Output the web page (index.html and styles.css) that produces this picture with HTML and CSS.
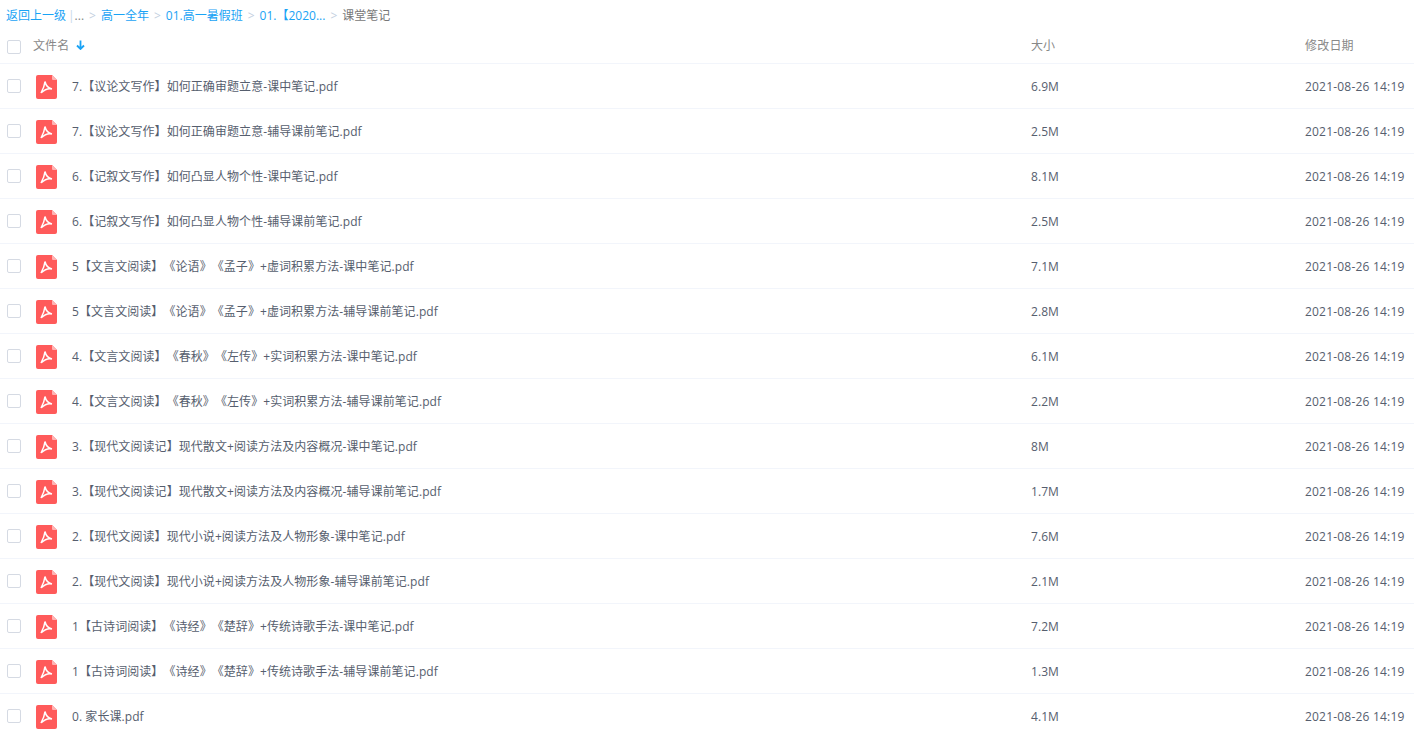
FILE: index.html
```html
<!DOCTYPE html>
<html lang="zh-CN">
<head>
    <meta charset="UTF-8">
    <title>课堂笔记</title>
    <link rel="stylesheet" href="styles.css">
</head>
<body>
    <svg class="sprite" width="0" height="0">
        <symbol id="pdf" viewBox="0 0 21 24">
            <path d="M2 0H16L21 5V22a2 2 0 0 1-2 2H2a2 2 0 0 1-2-2V2a2 2 0 0 1 2-2z" fill="#ff5a5a"/>
            <path d="M16 0L21 5H17a1 1 0 0 1-1-1z" fill="#ffb3b3"/>
            <path d="M9 6.500c-.3 3-1.800 7.500-4 11.500M9 6.500c.6 3 2.800 6.500 7 7.500M16 14c-3.500-.8-7.500.6-10.800 3.800" fill="none" stroke="#fff" stroke-width="1.500"/>
        </symbol>
    </svg>
    <div class="crumbs">
        <a>返回上一级</a><span class="bar">|</span><span class="dots">...</span><span class="sep">&gt;</span><a>高一全年</a><span class="sep">&gt;</span><a>01.高一暑假班</a><span class="sep">&gt;</span><a>01.【2020...</a><span class="sep">&gt;</span><span class="current">课堂笔记</span>
    </div>
    <div class="row head">
        <span class="check"></span>
        <div class="name">文件名<span class="sort">
            <svg width="9" height="10" viewBox="0 0 9 10"><path d="M4.500 0.500V8.500M1 5.500L4.500 9L8 5.500" fill="none" stroke="#1aa3f5" stroke-width="1.800"/></svg>
        </span></div>
        <div class="size">大小</div>
        <div class="date">修改日期</div>
    </div>
    <div class="row"><span class="check"></span><svg class="icon"><use href="#pdf"/></svg><div class="name">7.【议论文写作】如何正确审题立意-课中笔记.pdf</div><div class="size">6.9M</div><div class="date">2021-08-26 14:19</div></div>
    <div class="row"><span class="check"></span><svg class="icon"><use href="#pdf"/></svg><div class="name">7.【议论文写作】如何正确审题立意-辅导课前笔记.pdf</div><div class="size">2.5M</div><div class="date">2021-08-26 14:19</div></div>
    <div class="row"><span class="check"></span><svg class="icon"><use href="#pdf"/></svg><div class="name">6.【记叙文写作】如何凸显人物个性-课中笔记.pdf</div><div class="size">8.1M</div><div class="date">2021-08-26 14:19</div></div>
    <div class="row"><span class="check"></span><svg class="icon"><use href="#pdf"/></svg><div class="name">6.【记叙文写作】如何凸显人物个性-辅导课前笔记.pdf</div><div class="size">2.5M</div><div class="date">2021-08-26 14:19</div></div>
    <div class="row"><span class="check"></span><svg class="icon"><use href="#pdf"/></svg><div class="name">5【文言文阅读】《论语》《孟子》+虚词积累方法-课中笔记.pdf</div><div class="size">7.1M</div><div class="date">2021-08-26 14:19</div></div>
    <div class="row"><span class="check"></span><svg class="icon"><use href="#pdf"/></svg><div class="name">5【文言文阅读】《论语》《孟子》+虚词积累方法-辅导课前笔记.pdf</div><div class="size">2.8M</div><div class="date">2021-08-26 14:19</div></div>
    <div class="row"><span class="check"></span><svg class="icon"><use href="#pdf"/></svg><div class="name">4.【文言文阅读】《春秋》《左传》+实词积累方法-课中笔记.pdf</div><div class="size">6.1M</div><div class="date">2021-08-26 14:19</div></div>
    <div class="row"><span class="check"></span><svg class="icon"><use href="#pdf"/></svg><div class="name">4.【文言文阅读】《春秋》《左传》+实词积累方法-辅导课前笔记.pdf</div><div class="size">2.2M</div><div class="date">2021-08-26 14:19</div></div>
    <div class="row"><span class="check"></span><svg class="icon"><use href="#pdf"/></svg><div class="name">3.【现代文阅读记】现代散文+阅读方法及内容概况-课中笔记.pdf</div><div class="size">8M</div><div class="date">2021-08-26 14:19</div></div>
    <div class="row"><span class="check"></span><svg class="icon"><use href="#pdf"/></svg><div class="name">3.【现代文阅读记】现代散文+阅读方法及内容概况-辅导课前笔记.pdf</div><div class="size">1.7M</div><div class="date">2021-08-26 14:19</div></div>
    <div class="row"><span class="check"></span><svg class="icon"><use href="#pdf"/></svg><div class="name">2.【现代文阅读】现代小说+阅读方法及人物形象-课中笔记.pdf</div><div class="size">7.6M</div><div class="date">2021-08-26 14:19</div></div>
    <div class="row"><span class="check"></span><svg class="icon"><use href="#pdf"/></svg><div class="name">2.【现代文阅读】现代小说+阅读方法及人物形象-辅导课前笔记.pdf</div><div class="size">2.1M</div><div class="date">2021-08-26 14:19</div></div>
    <div class="row"><span class="check"></span><svg class="icon"><use href="#pdf"/></svg><div class="name">1【古诗词阅读】《诗经》《楚辞》+传统诗歌手法-课中笔记.pdf</div><div class="size">7.2M</div><div class="date">2021-08-26 14:19</div></div>
    <div class="row"><span class="check"></span><svg class="icon"><use href="#pdf"/></svg><div class="name">1【古诗词阅读】《诗经》《楚辞》+传统诗歌手法-辅导课前笔记.pdf</div><div class="size">1.3M</div><div class="date">2021-08-26 14:19</div></div>
    <div class="row"><span class="check"></span><svg class="icon"><use href="#pdf"/></svg><div class="name">0. 家长课.pdf</div><div class="size">4.1M</div><div class="date">2021-08-26 14:19</div></div>
</body>
</html>
```

FILE: styles.css
```css
html, body {
    height: 100%;
    overflow: hidden;
}
body {
    margin: 0;
    background: #fff;
    font-family: "Open Sans", "Noto Sans CJK SC", sans-serif;
    font-size: 12px;
    letter-spacing: 0.07px;
    color: #565e6e;
    text-spacing-trim: space-all;
}
.sprite {
    display: block;
    height: 0;
}
.crumbs {
    display: flex;
    align-items: center;
    height: 30px;
    padding-left: 6px;
    letter-spacing: 0;
    color: #666;
}
.crumbs a {
    color: #1aa3f5;
}
.bar {
    margin-left: 2px;
    color: #c7d8ea;
}
.dots {
    color: #888;
}
.sep {
    margin: 0 5px;
    color: #c3cfe0;
}
.current {
    color: #777;
}
.row {
    display: flex;
    align-items: center;
    height: 44px;
    border-bottom: 1px solid #f2f5fb;
}
.row.head {
    height: 29px;
    padding-bottom: 4px;
    color: #888;
}
.check {
    flex: none;
    width: 12px;
    height: 12px;
    margin-left: 7px;
    border: 1px solid #d5dae3;
    border-radius: 2px;
}
.head .check {
    margin-top: 4px;
}
.head .name {
    margin-left: 12px;
}
.sort {
    margin-left: 4px;
}
.icon {
    flex: none;
    width: 21px;
    height: 24px;
    margin-left: 15px;
    margin-top: 2px;
}
.name {
    flex: 1;
    margin-left: 15px;
}
.size {
    flex: none;
    width: 274px;
}
.date {
    flex: none;
    width: 109px;
    letter-spacing: 0.2px;
    white-space: nowrap;
}
```
